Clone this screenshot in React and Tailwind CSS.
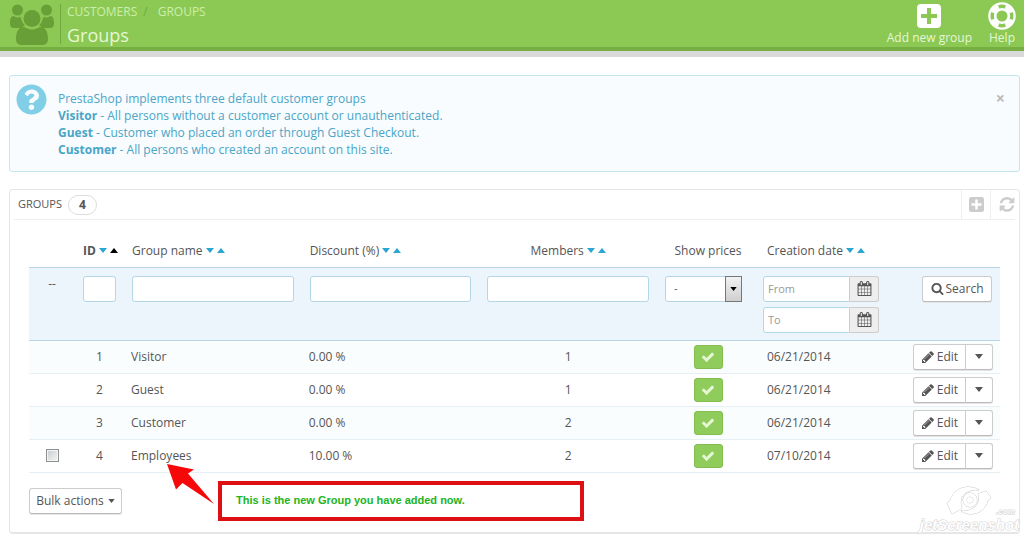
import { FaQuestionCircle } from 'react-icons/fa'

const groups = [
  { id: 1, name: 'Visitor', discount: '0.00 %', members: 1, created: '06/21/2014' },
  { id: 2, name: 'Guest', discount: '0.00 %', members: 1, created: '06/21/2014' },
  { id: 3, name: 'Customer', discount: '0.00 %', members: 2, created: '06/21/2014' },
  { id: 4, name: 'Employees', discount: '10.00 %', members: 2, created: '07/10/2014', selectable: true },
]

const inputClass = 'block h-[26px] w-full rounded-[3px] border border-[#b4d7e8] bg-white px-1 text-[11px] outline-none placeholder:text-[#999]'
const buttonClass = 'inline-flex h-[26px] items-center border border-[#ccc] border-b-[#bbb] bg-white text-[#555] shadow-[0_1px_0_#e4e4e4]'

// Font Awesome 4 outlines, all on a 1792 grid
const icons = {
  search: 'M1216 832q0-185-131.500-316.500t-316.500-131.500-316.500 131.500-131.500 316.500 131.500 316.500 316.500 131.500 316.500-131.500 131.500-316.500zm512 832q0 52-38 90t-90 38q-54 0-90-38l-343-342q-179 124-399 124-143 0-273.500-55.500t-225-150-150-225-55.500-273.500 55.500-273.500 150-225 225-150 273.500-55.500 273.500 55.500 225 150 150 225 55.500 273.500q0 220-124 399l343 343q37 37 37 90z',
  pencil: 'M491 1536l91-91-235-235-91 91v107h128v128h107zm523-928q0-22-22-22-10 0-17 7l-542 542q-7 7-7 17 0 22 22 22 10 0 17-7l542-542q7-7 7-17zm-54-192l416 416-832 832h-416v-416zm683 96q0 53-37 90l-166 166-416-416 166-165q36-38 90-38 53 0 91 38l235 234q37 39 37 91z',
  check: 'M1671 566q0 40-28 68l-724 724-136 136q-28 28-68 28t-68-28l-136-136-362-362q-28-28-28-68t28-68l136-136q28-28 68-28t68 28l294 295 656-657q28-28 68-28t68 28l136 136q28 28 28 68z',
  calendar: 'M192 1664h288v-288h-288v288zm352 0h320v-288h-320v288zm-352-352h288v-320h-288v320zm352 0h320v-320h-320v320zm-352-384h288v-288h-288v288zm736 736h320v-288h-320v288zm-384-736h320v-288h-320v288zm768 736h288v-288h-288v288zm-384-352h320v-320h-320v320zm-352-864v-288q0-13-9.500-22.500t-22.500-9.500h-64q-13 0-22.500 9.500t-9.500 22.500v288q0 13 9.500 22.500t22.500 9.500h64q13 0 22.500-9.500t9.500-22.500zm736 864h288v-320h-288v320zm-384-384h320v-288h-320v288zm384 0h288v-288h-288v288zm32-480v-288q0-13-9.500-22.500t-22.500-9.500h-64q-13 0-22.500 9.500t-9.500 22.500v288q0 13 9.500 22.500t22.500 9.500h64q13 0 22.500-9.500t9.500-22.500zm384-64v1280q0 52-38 90t-90 38h-1408q-52 0-90-38t-38-90v-1280q0-52 38-90t90-38h128v-96q0-66 47-113t113-47h64q66 0 113 47t47 113v96h384v-96q0-66 47-113t113-47h64q66 0 113 47t47 113v96h128q52 0 90 38t38 90z',
}

function Icon({ name, className }) {
  return (
    <svg viewBox="0 0 1792 1792" className={className} fill="currentColor" aria-hidden="true">
      <path d={icons[name]} />
    </svg>
  )
}

function CustomersIcon() {
  return (
    <svg viewBox="0 0 44 41" className="h-[41px] w-11 fill-[#699f37]" aria-hidden="true">
      <circle cx="7.500" cy="6" r="5.500" />
      <circle cx="36.500" cy="6" r="5.500" />
      <path d="M0 19c0-4 1-7 3.500-7 2 1.500 4.500 2 7 .8 1 3.700 2.300 6.500 4.500 8.800-1.500.5-2.500 1.400-3.300 2.400H4c-3 0-4-2-4-5z" />
      <path d="M44 19c0-4-1-7-3.500-7-2 1.500-4.500 2-7 .8-1 3.700-2.300 6.500-4.500 8.800 1.500.5 2.500 1.400 3.300 2.400H40c3 0 4-2 4-5z" />
      <circle cx="22" cy="14.500" r="8.500" />
      <path d="M6 35c0-6 2-12 7.500-12 2 0 4 2.500 8.500 2.500s6.500-2.500 8.500-2.500C36 23 38 29 38 35c0 4-2.500 6-6 6H12c-3.500 0-6-2-6-6z" />
    </svg>
  )
}

function PlusIcon({ className }) {
  return (
    <svg viewBox="0 0 24 24" className={className} fill="currentColor" fillRule="evenodd" aria-hidden="true">
      <path d="M4 0h16a4 4 0 0 1 4 4v16a4 4 0 0 1-4 4H4a4 4 0 0 1-4-4V4a4 4 0 0 1 4-4zm6 4v6H4v4h6v6h4v-6h6v-4h-6V4z" />
    </svg>
  )
}

function LifeRingIcon() {
  return (
    <svg viewBox="0 0 28 28" className="h-7 w-7" aria-hidden="true">
      <circle cx="14" cy="14" r="11" fill="none" stroke="white" strokeWidth="5.500" />
      <circle cx="14" cy="14" r="7" fill="none" stroke="white" strokeWidth="3" />
      <circle cx="14" cy="14" r="9.800" fill="none" stroke="#8bc954" strokeWidth="3.400" pathLength="80" strokeDasharray="9 11" strokeDashoffset="4.500" />
    </svg>
  )
}

function RefreshIcon() {
  return (
    <svg viewBox="0 0 1536 1664" className="h-4 w-4 fill-current" aria-hidden="true">
      <path d="M1511 928q0 5-1 7-64 268-268 434.500t-478 166.500q-146 0-282.500-55t-243.500-157l-129 129q-19 19-45 19t-45-19-19-45v-448q0-26 19-45t45-19h448q26 0 45 19t19 45-19 45l-137 137q71 66 161 102t187 36q134 0 250-65t186-179q11-17 53-117 8-23 30-23h192q13 0 22.500 9.500t9.500 22.500zm25-800v448q0 26-19 45t-45 19h-448q-26 0-45-19t-19-45 19-45l138-138q-148-137-349-137-134 0-250 65t-186 179q-11 17-53 117-8 23-30 23h-199q-13 0-22.500-9.500t-9.500-22.500v-7q65-268 270-434.500t480-166.500q146 0 284 55.500t245 156.500l130-129q19-19 45-19t45 19 19 45z" />
    </svg>
  )
}

function Triangle({ up, className }) {
  return (
    <svg viewBox="0 0 8 5" className={className} fill="currentColor" aria-hidden="true">
      <path d={up ? 'M0 5h8L4 0z' : 'M0 0h8L4 5z'} />
    </svg>
  )
}

function PageHeader() {
  return (
    <header className="flex h-[51px] items-start border-b-4 border-[#76ae43] bg-[#8bc954] pl-[10px] pr-2 text-[#e6f7d4]">
      <div className="pt-1">
        <CustomersIcon />
      </div>
      <div className="ml-[6px] mt-1 h-10 border-l border-[#72a943] pl-[6px]">
        <nav aria-label="Breadcrumb" className="flex text-xs leading-4 text-[#cdeeac]">
          <a href="#customers">CUSTOMERS</a>
          <span className="ml-[6px] text-[#72a943]">/</span>
          <a href="#groups" className="ml-[10px]">GROUPS</a>
        </nav>
        <h1 className="text-lg leading-[30px]">Groups</h1>
      </div>
      <div className="ml-auto flex gap-4 text-xs leading-4">
        <button className="flex flex-col items-center pt-[2px]">
          <span className="flex h-7 items-center">
            <PlusIcon className="h-6 w-6 text-white" />
          </span>
          Add new group
        </button>
        <button className="flex flex-col items-center pt-[2px]">
          <LifeRingIcon />
          Help
        </button>
      </div>
    </header>
  )
}

function InfoAlert() {
  return (
    <div role="alert" className="flex items-start rounded-[3px] border border-[#c5e6f0] bg-[#f8fcff] pb-[13px] pl-[6px] pr-[14px] pt-2 text-xs leading-[17px] text-[#4aa5c6]">
      <FaQuestionCircle className="h-[31px] w-[31px] shrink-0 text-[#81cfe6]" />
      <div className="ml-[11px] mt-[6px]">
        <p>PrestaShop implements three default customer groups</p>
        <p><b>Visitor</b> - All persons without a customer account or unauthenticated.</p>
        <p><b>Guest</b> - Customer who placed an order through Guest Checkout.</p>
        <p><b>Customer</b> - All persons who created an account on this site.</p>
      </div>
      <button aria-label="Close" className="ml-auto mt-[6px] text-base leading-[17px] font-bold text-[#bbb]">×</button>
    </div>
  )
}

function SortLinks({ active }) {
  return (
    <span className="ml-[3px] inline-flex gap-[3px] align-middle pb-1 text-[#2ba5d2]">
      <a href="#desc" aria-label="Sort descending"><Triangle className="h-[5px] w-2" /></a>
      <a href="#asc" aria-label="Sort ascending" className={active ? 'text-black' : ''}><Triangle up className="h-[5px] w-2" /></a>
    </span>
  )
}

function DateField({ label }) {
  return (
    <div className="flex w-[116px]">
      <input aria-label={label} placeholder={label} className="h-[26px] w-[87px] rounded-l-[3px] border border-[#b4d7e8] bg-white px-1 text-[11px] outline-none placeholder:text-[#999]" />
      <button aria-label="Open calendar" className="flex flex-1 items-center justify-center rounded-r-[3px] border border-l-0 border-[#ccc] bg-[#eee]">
        <Icon name="calendar" className="h-[15px] w-[15px]" />
      </button>
    </div>
  )
}

function FilterRow() {
  return (
    <tr className="h-[73px] border-y border-[#b5d6e5] bg-[#ebf5fb] align-top [&>td]:px-2 [&>td]:pt-2 [&>td]:pb-[7px]">
      <td className="text-center">--</td>
      <td><input aria-label="ID" className={inputClass} /></td>
      <td><input aria-label="Group name" className={inputClass} /></td>
      <td><input aria-label="Discount" className={inputClass} /></td>
      <td><input aria-label="Members" className={inputClass} /></td>
      <td>
        <div className="relative w-[77px]">
          <select aria-label="Show prices" className="block h-[26px] w-full appearance-none rounded-[3px] border border-[#b4d7e8] bg-white px-2 text-[11px]">
            <option>-</option>
            <option>Yes</option>
            <option>No</option>
          </select>
          <span className="pointer-events-none absolute inset-y-0 right-0 flex w-[17px] items-center justify-center border border-[#777] bg-linear-to-b from-[#f2f2f2] to-[#cfcfcf] text-black">
            <Triangle className="h-1 w-[7px]" />
          </span>
        </div>
      </td>
      <td>
        <div className="flex flex-col gap-[5px]">
          <DateField label="From" />
          <DateField label="To" />
        </div>
      </td>
      <td className="text-right">
        <button className={`${buttonClass} w-[70px] justify-center gap-[2px] rounded-[3px]`}>
          <Icon name="search" className="h-[13px] w-[13px]" />
          Search
        </button>
      </td>
    </tr>
  )
}

function GroupRow({ group }) {
  return (
    <tr className="h-[33px] border-b border-[#e6eff4] odd:bg-[#fafdfe]">
      <td className="text-center">
        {group.selectable && (
          <input type="checkbox" aria-label={`Select ${group.name}`} className="mx-auto block h-[13px] w-[13px] appearance-none border border-[#8e8f8f] bg-linear-to-br from-[#c8ccd0] to-[#f6f6f6] shadow-[inset_0_0_0_1px_#f4f4f4]" />
        )}
      </td>
      <td className="text-center">{group.id}</td>
      <td className="px-[7px]">{group.name}</td>
      <td className="px-[7px]">{group.discount}</td>
      <td className="px-2 text-center">{group.members}</td>
      <td className="pl-3 pr-2">
        <a href="#toggle" aria-label="Enabled" className="mx-auto flex h-6 w-[29px] items-center justify-center rounded-[3px] border border-[#82bd4d] bg-[#8fcc5b] text-[#e4f7d2]">
          <Icon name="check" className="h-[14px] w-[14px]" />
        </a>
      </td>
      <td className="pl-3">{group.created}</td>
      <td className="pr-[7px]">
        <div className="flex justify-end">
          <button className={`${buttonClass} w-[53px] justify-center gap-[2px] rounded-l-[3px]`}>
            <Icon name="pencil" className="h-[14px] w-[14px]" />
            Edit
          </button>
          <button aria-label="More actions" className={`${buttonClass} w-[27px] justify-center rounded-r-[3px] border-l-0`}>
            <Triangle className="h-[5px] w-2" />
          </button>
        </div>
      </td>
    </tr>
  )
}

function Callout() {
  return (
    <div className="relative ml-24 flex h-10 w-[366px] items-center border-4 border-[#dd1113] bg-white px-[14px] font-['Liberation_Sans',sans-serif] text-[11px] font-bold text-[#22b422]">
      This is the new Group you have added now.
      <svg viewBox="0 0 48 40" className="absolute -left-14 -top-[21px] h-10 w-12 fill-[#f60808]" aria-hidden="true">
        <path d="M1 0 28 5.500 22 9.500 48 40 16.500 19 10 25.500z" />
      </svg>
    </div>
  )
}

function Watermark() {
  return (
    <div className="pointer-events-none absolute -bottom-px right-0 flex flex-col items-center font-['Liberation_Sans',sans-serif] font-bold text-white italic [-webkit-text-stroke:1px_#cfcfcf] [paint-order:stroke_fill]">
      <div className="relative flex w-full justify-center">
        <svg viewBox="0 0 46 30" className="h-[30px] w-[46px] fill-white stroke-[#c8c8c8]" aria-hidden="true">
          <path d="M1 17 4 15C7 5 15 1 22 1c4 0 8 1 11 3-9-1-17 3-18 10-.5 3 0 6 1 8l-3 2-7 4z" />
          <path d="M45 12l-3 2c-2 9-9 14-17 14-4 0-7-1-10-3 10 1 18-5 18-12 0-2-.5-4-1-5l8-3z" />
          <circle cx="24" cy="14" r="7" />
          <circle cx="24" cy="14" r="3" />
        </svg>
        <span className="absolute right-1 bottom-0 text-[8px] leading-[8px]">.com</span>
      </div>
      <span className="text-[15px] leading-[17px]">jetScreenshot</span>
    </div>
  )
}

function GroupsPanel() {
  return (
    <section className="relative mt-[17px] rounded-[4px] border border-b-2 border-[#e6e6e6] bg-white pb-[11px]">
      <div className="mx-1 flex h-[30px] items-center border-b border-[#eee] pl-1">
        <h2 className="text-[11px] uppercase">Groups</h2>
        <span className="ml-[6px] flex h-5 w-[29px] items-center justify-center rounded-full border border-[#ddd] font-bold">4</span>
        <div className="ml-auto flex h-full text-[#ccc]">
          <button aria-label="Add new" className="flex w-[29px] items-center justify-center border-l border-[#eee]">
            <PlusIcon className="h-[15px] w-[15px]" />
          </button>
          <button aria-label="Refresh list" className="flex w-[25px] items-center justify-end border-l border-[#eee]">
            <RefreshIcon />
          </button>
        </div>
      </div>

      <div className="mx-[19px]">
        <table className="mt-4 w-full table-fixed border-collapse">
          <colgroup>
            <col className="w-[46px]" />
            <col className="w-[49px]" />
            <col />
            <col />
            <col />
            <col className="w-[98px]" />
            <col className="w-[130px]" />
            <col className="w-[115px]" />
          </colgroup>
          <thead>
            <tr className="h-[31px] text-left whitespace-nowrap [&>th]:font-normal">
              <td />
              <th className="pl-2"><b>ID</b><SortLinks active /></th>
              <th className="px-2">Group name<SortLinks /></th>
              <th className="px-2">Discount (%)<SortLinks /></th>
              <th className="px-2 text-center">Members<SortLinks /></th>
              <th className="pl-3 pr-2 text-center">Show prices</th>
              <th className="pl-3">Creation date<SortLinks /></th>
              <td />
            </tr>
            <FilterRow />
          </thead>
          <tbody>
            {groups.map((group) => (
              <GroupRow key={group.id} group={group} />
            ))}
          </tbody>
        </table>

        <div className="mt-2 flex items-center">
          <button className={`${buttonClass} w-[93px] justify-center gap-1 rounded-[3px]`}>
            Bulk actions
            <Triangle className="h-1 w-[7px]" />
          </button>
          <Callout />
        </div>
      </div>

      <Watermark />
    </section>
  )
}

export default function App() {
  return (
    <div className="min-h-screen bg-white font-['Open_Sans',sans-serif] text-xs text-[#555]">
      <PageHeader />
      <div className="h-[6px] bg-[#d9d9d9]" />
      <main className="ml-[9px] mr-1 pt-[18px]">
        <InfoAlert />
        <GroupsPanel />
      </main>
    </div>
  )
}
